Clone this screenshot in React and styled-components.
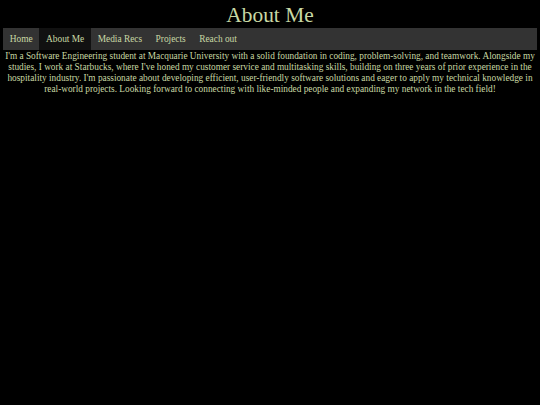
import React from "react";
import styled, { createGlobalStyle } from "styled-components";

const Global = createGlobalStyle`
  html, body { margin: 0; padding: 0; background: #000; }
  body { font-family: "Liberation Serif", "Times New Roman", serif; color: #c8d8a4; }
`;

const Page = styled.div`
  padding: 0 3px;
`;

const Title = styled.h1`
  margin: 0;
  padding-top: 3px;
  text-align: center;
  font-size: 21.4px;
  font-weight: normal;
  line-height: 25px;
  color: #c8d8a4;
`;

const Nav = styled.nav`
  display: flex;
  background: #333;
  height: 22px;
`;

const NavItem = styled.a`
  display: flex;
  align-items: center;
  padding: 0 6.7px;
  font-size: 9.4px;
  color: #c8d8a4;
  text-decoration: none;
  background: ${(p) => (p.$active ? "#111" : "transparent")};
`;

const Text = styled.p`
  margin: 0;
  padding-top: 1px;
  text-align: center;
  font-size: 9.3px;
  line-height: 11px;
  color: #c8d8a4;
`;

export default function App() {
  const items = ["Home", "About Me", "Media Recs", "Projects", "Reach out"];
  return (
    <Page>
      <Global />
      <Title>About Me</Title>
      <Nav>
        {items.map((it) => (
          <NavItem key={it} href="#" $active={it === "About Me"}>
            {it}
          </NavItem>
        ))}
      </Nav>
      <Text>
        I'm a Software Engineering student at Macquarie University with a solid foundation in coding,
        problem-solving, and teamwork. Alongside my studies, I work at Starbucks, where I've honed my
        customer service and multitasking skills, building on three years of prior experience in the
        hospitality industry. I'm passionate about developing efficient, user-friendly software
        solutions and eager to apply my technical knowledge in real-world projects. Looking forward to
        connecting with like-minded people and expanding my network in the tech field!
      </Text>
    </Page>
  );
}
